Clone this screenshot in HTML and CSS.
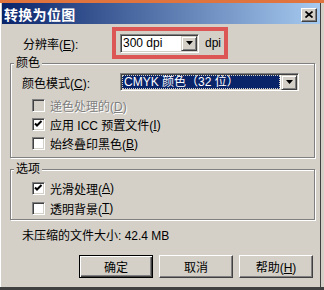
FILE: index.html
```html
<!DOCTYPE html>
<html><head><meta charset="utf-8"><link rel="stylesheet" href="styles.css"></head>
<body>
<div class="dialog">
  <div class="titlebar">
    <span class="title">转换为位图</span>
    <span class="close"><svg width="8" height="7" viewBox="0 0 8 7"><path d="M0.5 0.5L7.5 6.5M7.5 0.5L0.5 6.5" stroke="#000" stroke-width="1.7"/></svg></span>
  </div>
  <div class="res">
    <span class="res-label">分辨率(<u>E</u>):</span>
    <div class="hl">
      <div class="combo">
        <span class="combo-text">300 dpi</span>
        <span class="drop"><svg width="7" height="4" viewBox="0 0 7 4"><path d="M0 0h7L3.5 4z" fill="#000"/></svg></span>
      </div>
      <span class="unit">dpi</span>
    </div>
  </div>
  <fieldset class="group g1">
    <legend>颜色</legend>
    <div class="mode-row">
      <span class="mode-label">颜色模式(<u>C</u>):</span>
      <div class="combo wide">
        <span class="sel">CMYK 颜色（32 位）</span>
        <span class="drop"><svg width="7" height="4" viewBox="0 0 7 4"><path d="M0 0h7L3.5 4z" fill="#000"/></svg></span>
      </div>
    </div>
    <div class="check-row first disabled"><span class="cb off"></span><span class="dis">递色处理的(<u>D</u>)</span></div>
    <div class="check-row"><span class="cb"><svg width="13" height="13" viewBox="0 0 13 13"><path d="M3 5.5L5 7.5L9.5 3" fill="none" stroke="#000" stroke-width="2"/></svg></span>应用 ICC 预置文件(<u>I</u>)</div>
    <div class="check-row"><span class="cb"></span>始终叠印黑色(<u>B</u>)</div>
  </fieldset>
  <fieldset class="group g2">
    <legend>选项</legend>
    <div class="check-row r2 first"><span class="cb"><svg width="13" height="13" viewBox="0 0 13 13"><path d="M3 5.5L5 7.5L9.5 3" fill="none" stroke="#000" stroke-width="2"/></svg></span>光滑处理(<u>A</u>)</div>
    <div class="check-row r2"><span class="cb"></span>透明背景(<u>T</u>)</div>
  </fieldset>
  <div class="info">未压缩的文件大小: 42.4 MB</div>
  <div class="buttons">
    <button class="btn default">确定</button>
    <button class="btn">取消</button>
    <button class="btn">帮助(<u>H</u>)</button>
  </div>
</div>
</body></html>
```
FILE: styles.css
```css
html, body { margin: 0; padding: 0; }
body {
  font-family: "Liberation Sans", "Noto Sans CJK SC", sans-serif;
  font-size: 12px;
  color: #000;
  background: #d4d0c8;
}
.dialog {
  width: 324px;
  height: 290px;
  box-sizing: border-box;
  background: #d4d0c8;
  border-top: 3px solid #e0743f;
  border-bottom: 3px solid #404040;
  padding: 0 4px 0 2px;
  display: flex;
  flex-direction: column;
  box-shadow: inset 1px 0 #fff, inset -3px 0 #d4d0c8, inset -4px 0 #404040;
}
.titlebar {
  height: 21px;
  flex: none;
  display: flex;
  align-items: center;
  justify-content: space-between;
  background: linear-gradient(to right, #0a246a, #a6caf0);
  padding: 0 3px 0 2px;
}
.title {
  color: #fff;
  font-weight: bold;
  font-size: 14px;
  letter-spacing: 0.3px;
}
.close {
  width: 14px;
  height: 12px;
  background: #d4d0c8;
  border: 1px solid;
  border-color: #fff #404040 #404040 #fff;
  box-shadow: inset -1px -1px #808080;
  display: flex;
  align-items: center;
  justify-content: center;
  margin-top: 2px;
}
.res {
  display: flex;
  align-items: center;
  margin-top: 3px;
  padding-left: 21px;
  height: 32px;
  flex: none;
}
.res-label { width: 89px; }
.hl {
  box-sizing: border-box;
  height: 32px;
  width: 116px;
  border: 4px solid #dc5656;
  display: flex;
  align-items: center;
  padding-left: 4px;
}
.combo {
  width: 79px;
  height: 19px;
  box-sizing: border-box;
  background: #fff;
  border: 1px solid;
  border-color: #808080 #fff #fff #808080;
  box-shadow: inset 1px 1px #404040, inset -1px -1px #d4d0c8;
  display: flex;
  align-items: center;
  padding: 1px 1px 1px 2px;
}
.combo-text { flex: 1; }
.drop {
  width: 14px;
  height: 13px;
  background: #d4d0c8;
  border: 1px solid;
  border-color: #d4d0c8 #404040 #404040 #d4d0c8;
  box-shadow: inset 1px 1px #fff, inset -1px -1px #808080;
  display: flex;
  align-items: center;
  justify-content: center;
}
.unit { margin-left: 6px; }
.group {
  margin: -3px 0 0 8px;
  width: 305px;
  box-sizing: border-box;
  border: 1px solid #808080;
  box-shadow: inset 1px 1px #fff, 1px 1px #fff;
  padding: 0;
  min-width: 0;
  flex: none;
}
.group legend {
  margin-left: 3px;
  padding: 0 2px;
  line-height: 14px;
  background: #d4d0c8;
}
.g1 { padding-bottom: 4px; }
.g2 { margin-top: 4px; padding-bottom: 1px; }
.mode-row {
  display: flex;
  align-items: center;
  margin-top: 3px;
  padding-left: 11px;
  height: 18px;
}
.mode-label { width: 98px; }
.combo.wide {
  width: 179px;
  height: 18px;
  padding: 1px;
}
.sel {
  flex: 1;
  align-self: stretch;
  background: #0a246a;
  color: #fff;
  border: 1px dotted #d4d0c8;
  margin-right: 1px;
  line-height: 12px;
  padding-left: 1px;
}
.check-row {
  display: flex;
  align-items: center;
  height: 19px;
  padding-left: 21px;
}
.check-row.first { margin-top: 5px; }
.check-row.r2 { height: 20px; }
.g2 .check-row.first { margin-top: 2px; }
.cb {
  width: 13px;
  height: 13px;
  box-sizing: border-box;
  background: #fff;
  border: 1px solid;
  border-color: #808080 #fff #fff #808080;
  box-shadow: inset 1px 1px #404040, inset -1px -1px #d4d0c8;
  margin-right: 5px;
  display: flex;
  align-items: center;
  justify-content: center;
  flex: none;
}
.cb svg { flex: none; margin: -1px; }
.cb.off { background: #d4d0c8; }
.dis { color: #808080; text-shadow: 1px 1px #fff; }
.info {
  margin-top: 9px;
  padding-left: 20px;
  line-height: 14px;
  flex: none;
}
.buttons {
  display: flex;
  gap: 6px;
  margin-top: 12px;
  padding-left: 77px;
  flex: none;
}
.btn {
  width: 74px;
  height: 23px;
  box-sizing: border-box;
  font: inherit;
  background: #d4d0c8;
  border: 1px solid;
  border-color: #fff #404040 #404040 #fff;
  box-shadow: inset -1px -1px #808080;
  padding: 0;
  color: #000;
}
.btn.default {
  border: 1px solid #000;
  box-shadow: inset 1px 1px #fff, inset -1px -1px #404040, inset -2px -2px #808080;
}
```
